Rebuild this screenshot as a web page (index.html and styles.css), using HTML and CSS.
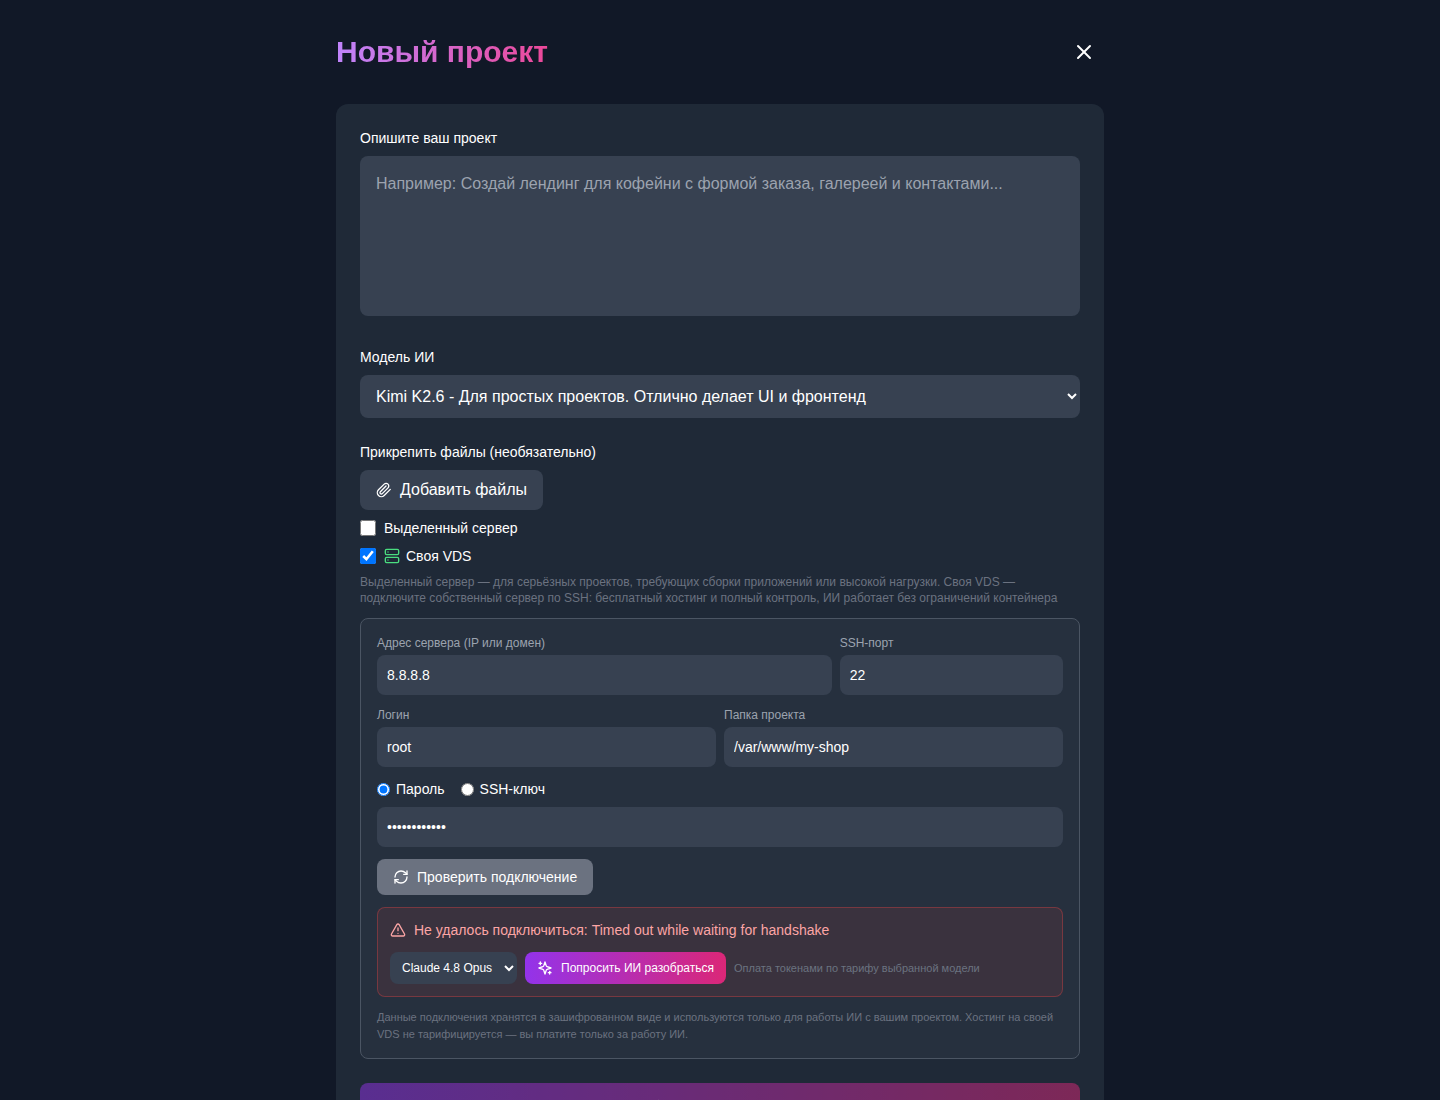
FILE: index.html
```
<!DOCTYPE html>
<html lang="ru">

<head>
    <meta charset="UTF-8">
    <meta name="viewport" content="width=device-width, initial-scale=1.0">
    <title>Новый проект</title>
    <link rel="stylesheet" href="styles.css">
</head>

<body>
    <div class="container">
        <header class="header">
            <h1 class="title">Новый проект</h1>
            <button class="close-btn" type="button" aria-label="Закрыть">
                <svg class="icon icon-lg" viewBox="0 0 24 24">
                    <path d="M18 6 6 18" />
                    <path d="m6 6 12 12" />
                </svg>
            </button>
        </header>

        <form class="panel">
            <div class="field">
                <label class="label" for="description">Опишите ваш проект</label>
                <textarea class="description" id="description" placeholder="Например: Создай лендинг для кофейни с формой заказа, галереей и контактами..."></textarea>
            </div>

            <div class="field">
                <label class="label" for="model">Модель ИИ</label>
                <select class="model" id="model">
                    <option>Kimi K2.6 - Для простых проектов. Отлично делает UI и фронтенд</option>
                </select>
            </div>

            <div class="field">
                <span class="label">Прикрепить файлы (необязательно)</span>
                <button class="attach-btn" type="button">
                    <svg class="icon" viewBox="0 0 24 24">
                        <path d="m21.44 11.05-9.19 9.19a6 6 0 0 1-8.49-8.49l8.57-8.57A4 4 0 1 1 18 8.84l-8.59 8.57a2 2 0 0 1-2.83-2.83l8.49-8.48" />
                    </svg>
                    Добавить файлы
                </button>

                <label class="check">
                    <input type="checkbox">
                    Выделенный сервер
                </label>
                <label class="check">
                    <input type="checkbox" checked>
                    <span class="check-text">
                        <svg class="icon icon-green" viewBox="0 0 24 24">
                            <rect width="20" height="8" x="2" y="2" rx="2" ry="2" />
                            <rect width="20" height="8" x="2" y="14" rx="2" ry="2" />
                            <path d="M6 6h.01M6 18h.01" />
                        </svg>
                        Своя VDS
                    </span>
                </label>
                <p class="hint">Выделенный сервер — для серьёзных проектов, требующих сборки приложений или высокой нагрузки. Своя VDS — подключите собственный сервер по SSH: бесплатный хостинг и полный контроль, ИИ работает без ограничений контейнера</p>

                <div class="vds">
                    <div class="row row-3">
                        <div class="wide">
                            <label class="small-label" for="host">Адрес сервера (IP или домен)</label>
                            <input class="input" id="host" type="text" value="8.8.8.8">
                        </div>
                        <div>
                            <label class="small-label" for="port">SSH-порт</label>
                            <input class="input" id="port" type="text" value="22">
                        </div>
                    </div>
                    <div class="row row-2">
                        <div>
                            <label class="small-label" for="login">Логин</label>
                            <input class="input" id="login" type="text" value="root">
                        </div>
                        <div>
                            <label class="small-label" for="folder">Папка проекта</label>
                            <input class="input" id="folder" type="text" value="/var/www/my-shop">
                        </div>
                    </div>

                    <div class="auth">
                        <div class="radios">
                            <label class="radio"><input type="radio" name="auth" checked>Пароль</label>
                            <label class="radio"><input type="radio" name="auth">SSH-ключ</label>
                        </div>
                        <input class="input" type="password" value="abcdefgh1234" aria-label="Пароль">
                    </div>

                    <button class="test-btn" type="button">
                        <svg class="icon" viewBox="0 0 24 24">
                            <path d="M3 12a9 9 0 0 1 9-9 9.75 9.75 0 0 1 6.74 2.74L21 8" />
                            <path d="M21 3v5h-5" />
                            <path d="M21 12a9 9 0 0 1-9 9 9.75 9.75 0 0 1-6.74-2.74L3 16" />
                            <path d="M8 16H3v5" />
                        </svg>
                        Проверить подключение
                    </button>

                    <div class="error">
                        <div class="error-text">
                            <svg class="icon" viewBox="0 0 24 24">
                                <path d="m21.73 18-8-14a2 2 0 0 0-3.48 0l-8 14A2 2 0 0 0 4 21h16a2 2 0 0 0 1.73-3Z" />
                                <path d="M12 9v4" />
                                <path d="M12 17h.01" />
                            </svg>
                            Не удалось подключиться: Timed out while waiting for handshake
                        </div>
                        <div class="error-actions">
                            <select class="fix-model" aria-label="Модель для диагностики">
                                <option>Claude 4.8 Opus</option>
                            </select>
                            <button class="fix-btn" type="button">
                                <svg class="icon" viewBox="0 0 24 24">
                                    <path d="m12 3-1.912 5.813a2 2 0 0 1-1.275 1.275L3 12l5.813 1.912a2 2 0 0 1 1.275 1.275L12 21l1.912-5.813a2 2 0 0 1 1.275-1.275L21 12l-5.813-1.912a2 2 0 0 1-1.275-1.275L12 3Z" />
                                    <path d="M5 3v4" />
                                    <path d="M19 17v4" />
                                    <path d="M3 5h4" />
                                    <path d="M17 19h4" />
                                </svg>
                                Попросить ИИ разобраться
                            </button>
                            <span class="fix-note">Оплата токенами по тарифу выбранной модели</span>
                        </div>
                    </div>

                    <p class="vds-note">Данные подключения хранятся в зашифрованном виде и используются только для работы ИИ с вашим проектом. Хостинг на своей VDS не тарифицируется — вы платите только за работу ИИ.</p>
                </div>
            </div>

            <button class="submit-btn" type="submit" disabled>
                <svg class="icon" viewBox="0 0 24 24">
                    <path d="M13 2 3 14h9l-1 8 10-12h-9l1-8z" />
                </svg>
                Создать проект
            </button>
        </form>
    </div>
</body>

</html>
```
FILE: styles.css
```
* {
    box-sizing: border-box;
}

body {
    margin: 0;
    min-height: 100vh;
    background: #111827;
    color: white;
    font-family: "Liberation Sans", Arial, sans-serif;
    font-size: 16px;
    line-height: 1.5;
}

button,
input,
select,
textarea {
    font: inherit;
    color: inherit;
    border: none;
    border-radius: 8px;
}

input,
select,
textarea {
    background: #374151;
}

button {
    padding: 0;
    cursor: pointer;
}

h1,
p {
    margin: 0;
}

.container {
    max-width: 768px;
    margin: 0 auto;
    padding: 32px 0;
}

.header {
    display: flex;
    justify-content: space-between;
    align-items: center;
    margin-bottom: 32px;
}

.title {
    font-size: 30px;
    line-height: 36px;
    font-weight: bold;
    color: transparent;
    background: linear-gradient(to right, #c084fc, #ec4899);
    -webkit-background-clip: text;
    background-clip: text;
}

.close-btn {
    display: flex;
    padding: 8px;
    background: none;
}

.icon {
    width: 16px;
    height: 16px;
    flex-shrink: 0;
    fill: none;
    stroke: currentColor;
    stroke-width: 2;
    stroke-linecap: round;
    stroke-linejoin: round;
}

.icon-lg {
    width: 24px;
    height: 24px;
}

.icon-green {
    color: #4ade80;
}

.panel {
    padding: 24px;
    background: #1f2937;
    border-radius: 12px;
}

.field {
    margin-bottom: 24px;
}

.label {
    display: block;
    margin-bottom: 8px;
    font-size: 14px;
    line-height: 20px;
}

.description {
    width: 100%;
    height: 160px;
    padding: 16px;
    resize: none;
}

.description::placeholder {
    color: #9ca3af;
}

.model {
    display: block;
    width: 100%;
    padding: 12px;
}

.attach-btn {
    display: flex;
    align-items: center;
    gap: 8px;
    padding: 8px 16px;
    background: #374151;
}

/* server options */
.check {
    display: flex;
    align-items: center;
    gap: 8px;
    margin-top: 8px;
    font-size: 14px;
    line-height: 20px;
}

.check input {
    width: 16px;
    height: 16px;
    margin: 0;
}

.check-text {
    display: flex;
    align-items: center;
    gap: 6px;
}

.hint {
    margin-top: 8px;
    font-size: 12px;
    line-height: 16px;
    color: #6b7280;
}

.vds {
    display: flex;
    flex-direction: column;
    gap: 12px;
    margin-top: 12px;
    padding: 16px;
    background: rgba(55, 65, 81, 0.3);
    border: 1px solid #4b5563;
    border-radius: 8px;
}

.row {
    display: grid;
    gap: 8px;
}

.row-3 {
    grid-template-columns: repeat(3, 1fr);
}

.row-2 {
    grid-template-columns: repeat(2, 1fr);
}

.wide {
    grid-column: span 2;
}

.small-label {
    display: block;
    margin-bottom: 4px;
    font-size: 12px;
    line-height: 16px;
    color: #9ca3af;
}

.input {
    display: block;
    width: 100%;
    height: 40px;
    padding: 10px;
    font-size: 14px;
    line-height: 20px;
}

.radios {
    display: flex;
    gap: 16px;
    margin-bottom: 8px;
}

.radio {
    display: flex;
    align-items: center;
    gap: 6px;
    font-size: 14px;
    line-height: 20px;
}

.radio input {
    margin: 0;
}

.test-btn {
    display: flex;
    align-items: center;
    align-self: flex-start;
    gap: 8px;
    padding: 8px 16px;
    font-size: 14px;
    line-height: 20px;
    background: #6b7280;
}

/* connection error */
.error {
    padding: 12px;
    background: rgba(239, 68, 68, 0.1);
    border: 1px solid rgba(239, 68, 68, 0.35);
    border-radius: 8px;
}

.error-text {
    display: flex;
    align-items: center;
    gap: 8px;
    margin-bottom: 12px;
    font-size: 14px;
    line-height: 20px;
    color: #fca5a5;
}

.error-actions {
    display: flex;
    flex-wrap: wrap;
    align-items: center;
    gap: 8px;
}

.fix-model {
    height: 32px;
    padding: 8px;
    font-size: 12px;
    line-height: 16px;
}

.fix-btn {
    display: flex;
    align-items: center;
    gap: 8px;
    padding: 8px 12px;
    font-size: 12px;
    line-height: 16px;
    background: linear-gradient(to right, #9333ea, #db2777);
}

.fix-note,
.vds-note {
    font-size: 11px;
    color: #6b7280;
}

.submit-btn {
    display: flex;
    justify-content: center;
    align-items: center;
    gap: 8px;
    width: 100%;
    padding: 12px;
    background: linear-gradient(to right, #9333ea, #db2777);
}

.submit-btn:disabled {
    opacity: 0.5;
    cursor: not-allowed;
}
```
